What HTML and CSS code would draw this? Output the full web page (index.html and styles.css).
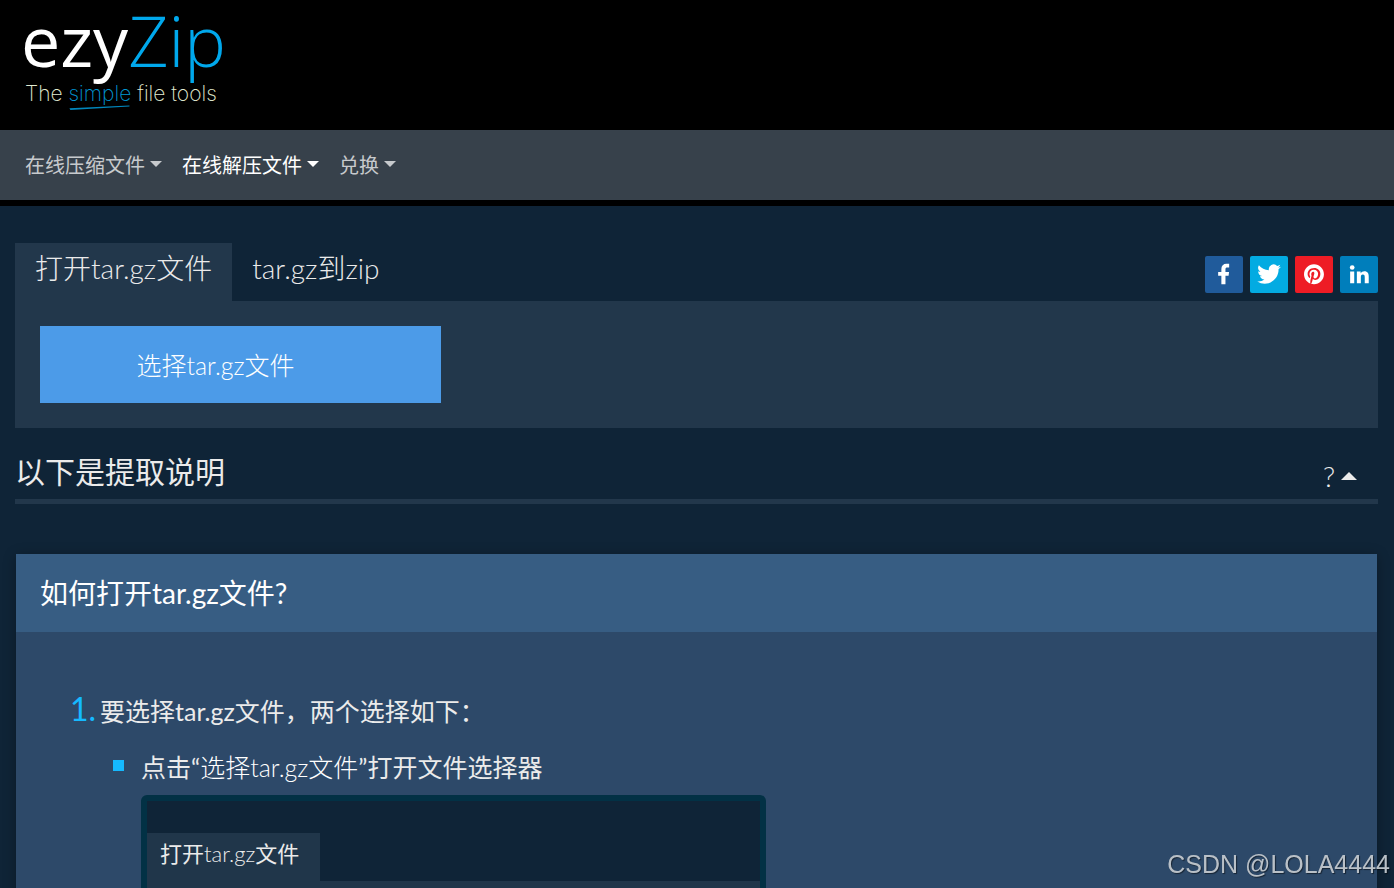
FILE: index.html
```html
<!DOCTYPE html>
<html lang="zh-CN">
<head>
<meta charset="utf-8">
<meta name="viewport" content="width=device-width, initial-scale=1">
<title>ezyZip</title>
<link rel="stylesheet" href="styles.css">
</head>

<body>
<header class="masthead">
	<a class="logo" href="#">
		<span class="logo-name"><span class="logo-ezy">ezy</span><span class="logo-zip">Zip</span></span>
		<span class="logo-tag">The <span class="logo-simple">simple<svg class="logo-line" viewBox="0 0 62 6" aria-hidden="true"><path d="M1 3.2L61 .4L61 1.4L48 2.2L2 5Z" fill="#0087bd"/></svg></span> file tools</span>
	</a>
</header>

<nav class="navbar">
	<button type="button" class="nav-link">在线压缩文件<span class="caret"></span></button>
	<button type="button" class="nav-link active">在线解压文件<span class="caret"></span></button>
	<button type="button" class="nav-link">兑换<span class="caret"></span></button>
</nav>

<main class="container">
	<div class="tab-bar">
		<div class="tabs">
			<a class="tab active" href="#">打开tar.gz文件</a>
			<a class="tab" href="#">tar.gz到zip</a>
		</div>
		<div class="share">
			<a class="share-link facebook" href="#" aria-label="Facebook"><svg viewBox="0 0 38 38"><path d="M16.3 29V20.2H13V16.4H16.3V13.4C16.3 10 18.3 8 21.5 8H24.3V11.8H22.4C21 11.8 20.5 12.5 20.5 13.7V16.4H24.2L23.7 20.2H20.5V29Z"/></svg></a>
			<a class="share-link twitter" href="#" aria-label="Twitter"><svg viewBox="0 0 24 24"><g transform="translate(4.4 4) scale(.64)"><path d="M23.95 4.57a10 10 0 01-2.82.77 4.96 4.96 0 002.16-2.72c-.95.55-2 .96-3.13 1.18a4.92 4.92 0 00-8.38 4.48C7.69 8.1 4.07 6.13 1.64 3.16a4.92 4.92 0 001.52 6.57 4.9 4.9 0 01-2.23-.61v.06a4.92 4.92 0 003.95 4.83 5 5 0 01-2.21.08 4.94 4.94 0 004.6 3.42A9.87 9.87 0 010 19.54a14 14 0 007.55 2.21c9.05 0 14-7.5 14-13.98 0-.21 0-.42-.02-.63a9.94 9.94 0 002.46-2.55z"/></g></svg></a>
			<a class="share-link pinterest" href="#" aria-label="Pinterest"><svg viewBox="0 0 24 24"><g transform="translate(5.5 5.4) scale(.54)"><path d="M12.02 0C5.4 0 .03 5.37.03 11.99c0 5.08 3.16 9.42 7.62 11.16-.1-.95-.2-2.4.04-3.44.22-.94 1.4-5.96 1.4-5.96s-.36-.72-.36-1.78c0-1.66.97-2.91 2.17-2.91 1.02 0 1.52.77 1.52 1.69 0 1.03-.65 2.57-.99 3.99-.28 1.19.6 2.17 1.78 2.17 2.13 0 3.77-2.25 3.77-5.49 0-2.86-2.06-4.87-5.01-4.87-3.41 0-5.41 2.56-5.41 5.2 0 1.03.39 2.14.89 2.74.1.12.11.23.08.35l-.33 1.36c-.05.22-.17.27-.4.16-1.5-.69-2.43-2.88-2.43-4.65 0-3.78 2.75-7.25 7.92-7.25 4.16 0 7.39 2.97 7.39 6.92 0 4.14-2.61 7.46-6.23 7.46-1.21 0-2.36-.63-2.76-1.37l-.75 2.85c-.27 1.04-1 2.35-1.5 3.15 1.12.34 2.31.53 3.55.53 6.61 0 11.99-5.37 11.99-11.99C24.01 5.37 18.64 0 12.02 0z"/></g></svg></a>
			<a class="share-link linkedin" href="#" aria-label="LinkedIn"><svg viewBox="0 0 38 38"><circle cx="12" cy="11.8" r="2.4"/><path d="M9.9 16H14.1V28H9.9ZM16.8 16H20.7V17.7C21.4 16.5 22.9 15.7 24.5 15.7C28 15.7 29 18 29 21.3V28H24.9V22C24.9 20.4 24.7 19.1 22.9 19.1C21.3 19.1 20.9 20.4 20.9 22V28H16.8Z"/></svg></a>
		</div>
	</div>

	<div class="panel">
		<button type="button" class="select-file">选择tar.gz文件</button>
	</div>

	<div class="section-title">
		<h1>以下是提取说明</h1>
		<button type="button" class="help">?<span class="caret caret-up"></span></button>
	</div>

	<section class="card">
		<h2 class="card-header">如何打开tar.gz文件?</h2>
		<div class="card-body">
			<ol class="steps">
				<li>
					要选择tar.gz文件，两个选择如下：
					<ul class="choices">
						<li>
							点击“<span class="light">选择tar.gz文件</span>”打开文件选择器
							<div class="preview">
								<div class="preview-tab">打开<span class="ext">tar.gz</span>文件</div>
								<div class="preview-panel"></div>
							</div>
						</li>
					</ul>
				</li>
			</ol>
		</div>
	</section>
</main>

<div class="watermark">CSDN @LOLA4444</div>
</body>
</html>
```
FILE: styles.css
```css
* {
	box-sizing: border-box;
}

body {
	margin: 0;
	height: 100vh;
	overflow: hidden;
	background: #0f2437;
	color: #ebebeb;
	font-family: Lato, "Noto Sans CJK SC", sans-serif;
	font-size: 25px;
}

a {
	color: inherit;
	text-decoration: none;
}

button {
	border: 0;
	background: none;
	color: inherit;
	font-family: inherit;
	cursor: pointer;
}

/* header */
.masthead {
	height: 130px;
	padding: 0 21px;
	background: #000;
}

.logo {
	display: inline-flex;
	flex-direction: column;
	gap: 2px;
	font-family: "Open Sans", sans-serif;
}

.logo-name {
	font-size: 70px;
	line-height: 80px;
}

.logo-ezy {
	color: #fff;
}

.logo-zip {
	color: #00a8ec;
	font-weight: 300;
}

.logo-tag {
	padding-left: 4px;
	color: #e2ecd2;
	font-family: Inter, sans-serif;
	font-size: 21px;
	font-weight: 200;
	line-height: 24px;
}

.logo-simple {
	position: relative;
	color: #0096d2;
}

.logo-line {
	position: absolute;
	left: 0;
	bottom: -5px;
	width: 100%;
	height: 6px;
}

/* navigation */
.navbar {
	display: flex;
	gap: 20px;
	height: 76px;
	padding: 0 25px 2px;
	background: #37414b;
	border-bottom: 6px solid #000;
}

.nav-link {
	display: flex;
	align-items: center;
	gap: 5px;
	padding: 0;
	color: #c7cacd;
	font-size: 20px;
}

.nav-link.active {
	color: #fff;
}

.caret {
	border: 6px solid transparent;
	border-top-color: currentColor;
	border-bottom: 0;
}

.caret-up {
	border: 8px solid transparent;
	border-bottom-color: currentColor;
	border-top: 0;
}

/* tabs */
.container {
	padding: 37px 16px 0 15px;
}

.tab-bar {
	display: flex;
	justify-content: space-between;
}

.tabs {
	display: flex;
}

.tab {
	height: 58px;
	padding: 0 20px;
	font-size: 28px;
	font-weight: 300;
	line-height: 50px;
}

.tab.active {
	background: #22374b;
}

.share {
	display: flex;
	gap: 7px;
	padding-top: 13px;
}

.share-link {
	width: 38px;
	height: 37px;
	border-radius: 2px;
}

.share-link svg {
	display: block;
	width: 100%;
	height: 100%;
	fill: #fff;
}

.facebook {
	background: #205b9b;
}

.twitter {
	background: #03abe2;
}

.pinterest {
	background: #ee1c25;
}

.linkedin {
	background: #007ebb;
}

.panel {
	padding: 25px;
	background: #22374b;
}

.select-file {
	display: block;
	width: 401px;
	height: 77px;
	padding: 0 50px 2px 0;
	background: #4c9be8;
	color: #fff;
	font-size: 25px;
	font-weight: 300;
}

/* instructions */
.section-title {
	display: flex;
	justify-content: space-between;
	align-items: center;
	height: 76px;
	margin-bottom: 50px;
	padding-top: 12px;
	border-bottom: 5px solid #22374b;
}

.section-title h1 {
	margin: 0;
	font-size: 30px;
	font-weight: 400;
}

.help {
	display: flex;
	align-items: center;
	gap: 6px;
	padding: 12px 21px 0 0;
	font-size: 28px;
	font-weight: 300;
}

.card {
	margin: 0 1px;
	background: #2d4969;
	box-shadow: 0 2px 12px rgba(0, 0, 0, .3);
}

.card-header {
	margin: 0;
	padding: 0 24px;
	background: #375d83;
	color: #fff;
	font-size: 28px;
	font-weight: 400;
	line-height: 78px;
}

.card-body {
	padding: 57px 24px;
}

.steps {
	margin: 0;
	padding-left: 60px;
	line-height: 40px;
}

.steps > li::marker {
	content: counter(list-item) ".\2009";
	color: #15b9ff;
	font-size: 32px;
}

.choices {
	margin: 0;
	padding: 16px 0 0 41px;
	list-style: none;
}

.choices > li::before {
	content: "";
	float: left;
	width: 11px;
	height: 11px;
	margin: 13px 0 0 -28px;
	background: #15b9ff;
}

.light {
	color: #fff;
	font-weight: 300;
}

.preview {
	width: 625px;
	max-width: 100%;
	margin-top: 8px;
	padding-top: 32px;
	background: #0f2437;
	border: 6px solid #023145;
	border-radius: 6px;
}

.preview-tab {
	width: 173px;
	height: 48px;
	padding-left: 13px;
	background: #20364a;
	font-size: 22px;
	line-height: 42px;
}

.ext {
	font-weight: 300;
}

.preview-panel {
	height: 110px;
	background: #20364a;
}

.watermark {
	position: fixed;
	right: 4px;
	bottom: 8px;
	color: #b9c0c7;
	font-family: "Liberation Sans", sans-serif;
	font-size: 25px;
	line-height: 32px;
	text-shadow: 1px 1px 1px rgba(0, 0, 0, .5);
}
```
